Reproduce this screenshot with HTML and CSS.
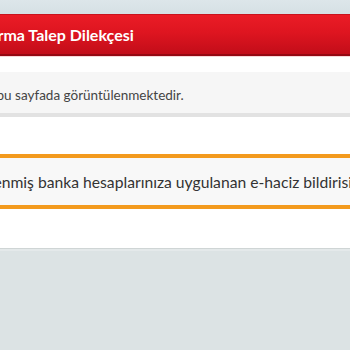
FILE: index.html
```html
<!DOCTYPE html>
<html lang="tr">
<head>
<meta charset="utf-8">
<link rel="stylesheet" href="styles.css">
</head>
<body>
<div class="page">
  <div class="topbar"></div>
  <div class="header"><h1 class="title">Haciz Kaldırma Talep Dilekçesi</h1></div>
  <div class="content">
    <div class="info"><p class="info-text">Hizmetin açıklaması bu sayfada görüntülenmektedir.</p></div>
    <div class="notice"><p class="notice-text">Adınıza belirlenmiş banka hesaplarınıza uygulanan e-haciz bildirisinin kaldırılması için talepte bulunabilirsiniz.</p></div>
  </div>
  <div class="footer"></div>
</div>
</body>
</html>
```
FILE: styles.css
```css
html, body {
  margin: 0;
  padding: 0;
  background: #ffffff;
  overflow: hidden;
}
.page {
  width: 350px;
  height: 350px;
  display: flex;
  flex-direction: column;
  font-family: Lato, "Open Sans", sans-serif;
  overflow: hidden;
}
.topbar {
  height: 14px;
  background: linear-gradient(#dde6ea, #d6e0e4);
  flex: none;
}
.header {
  height: 42px;
  flex: none;
  box-sizing: border-box;
  background: linear-gradient(#ea1c26 0%, #de1520 45%, #c20d19 100%);
  border-top: 1px solid #c8141e;
  border-bottom: 2px solid #950812;
  box-shadow: 0 1px 0 #f7d6d8;
  display: flex;
  align-items: center;
  overflow: hidden;
}
.title {
  margin: 0;
  color: #ffffff;
  font-size: 16px;
  font-weight: 700;
  white-space: nowrap;
  text-indent: -82px;
}
.content {
  flex: 1;
  display: flex;
  flex-direction: column;
  padding-top: 16px;
  gap: 37px;
}
.info {
  background: #f6f6f6;
  border-bottom: 4px solid #e2e2e2;
  display: flex;
  align-items: center;
  padding-top: 4px;
  box-sizing: border-box;
  height: 45px;
  overflow: hidden;
}
.info-text {
  margin: 0;
  color: #444444;
  font-size: 13.5px;
  white-space: nowrap;
  text-indent: -124px;
}
.notice {
  height: 47px;
  background: #f8f8f8;
  border-top: 4px solid #f39a1d;
  border-bottom: 4px solid #f39a1d;
  display: flex;
  align-items: center;
  overflow: hidden;
}
.notice-text {
  margin: 0;
  color: #333333;
  font-size: 15.7px;
  white-space: nowrap;
  text-indent: -95px;
}
.footer {
  height: 101px;
  flex: none;
  background: #dce3e4;
  border-top: 1px solid #cfd5d5;
  box-shadow: inset 0 2px 0 #e4e9ea;
}
```
